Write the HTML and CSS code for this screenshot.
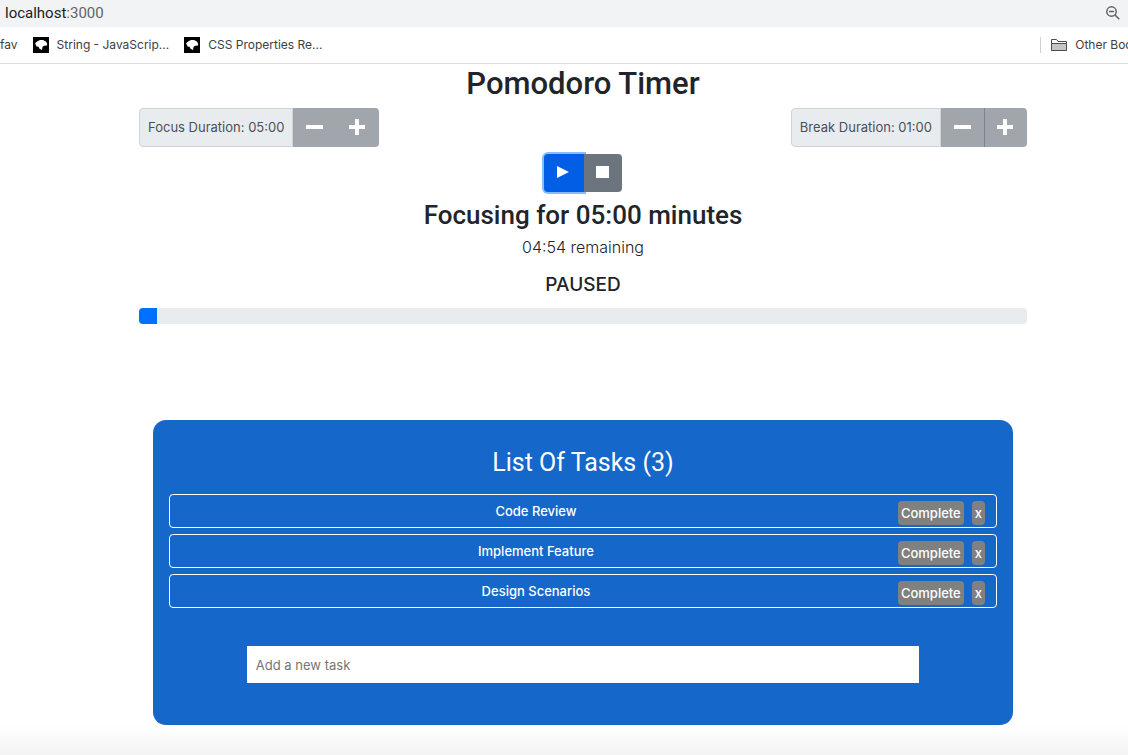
FILE: index.html
```html
<!DOCTYPE html>
<html lang="en">
<head>
<meta charset="utf-8">
<title>Pomodoro Timer</title>
<link rel="stylesheet" href="styles.css">
</head>
<body>
<header class="browser">
  <div class="address">
    <span class="url"><span class="host">localhost</span>:3000</span>
    <button class="zoom-button" type="button" aria-label="Zoom">
      <svg width="16" height="16" viewBox="0 0 16 16" fill="none" stroke="#5f6368" stroke-width="1.5"><circle cx="6.5" cy="6.5" r="4.7"/><path d="M4 6.5h5M10 10l4.3 4.3"/></svg>
    </button>
  </div>
  <nav class="bookmarks">
    <a class="bookmark" href="#">fav</a>
    <a class="bookmark" href="#">
      <svg width="16" height="16" viewBox="0 0 16 16"><path fill="#000" d="M0 0h16v16H0z"/><path fill="#fff" d="M2 6.500 4 4.500 7 3h3l3 1.500 1.200 2.500-.2 1.500-3 .3-1.500 1.200-.5 3-2.500-1.200-1-2L3.500 9.500 3 8z"/></svg>
      String - JavaScrip...
    </a>
    <a class="bookmark" href="#">
      <svg width="16" height="16" viewBox="0 0 16 16"><path fill="#000" d="M0 0h16v16H0z"/><path fill="#fff" d="M2 6.500 4 4.500 7 3h3l3 1.500 1.200 2.500-.2 1.500-3 .3-1.500 1.200-.5 3-2.500-1.200-1-2L3.500 9.500 3 8z"/></svg>
      CSS Properties Re...
    </a>
    <a class="bookmark other" href="#">
      <svg width="16" height="14" viewBox="0 0 16 14"><path fill="#fff" stroke="#4a4d51" d="M.5 12.500V1.500h5l1.500 2h8.500v9z"/><path fill="#c6c6c8" stroke="#4a4d51" d="M.5 5.500h15v7H.5z"/></svg>
      Other Bookmarks
    </a>
  </nav>
</header>
<main class="page">
  <div class="timer">
    <h1 class="title">Pomodoro Timer</h1>
    <div class="durations">
      <div class="group">
        <span class="duration">Focus Duration: 05:00</span>
        <button class="step" type="button" disabled aria-label="Decrease focus duration"><svg width="18" height="18" viewBox="0 0 18 18"><path d="M0 6h17v4H0z"/></svg></button>
        <button class="step" type="button" disabled aria-label="Increase focus duration"><svg width="18" height="18" viewBox="0 0 18 18"><path d="M6 0h4v6h6v4h-6v6H6v-6H0V6h6z"/></svg></button>
      </div>
      <div class="group">
        <span class="duration">Break Duration: 01:00</span>
        <button class="step" type="button" disabled aria-label="Decrease break duration"><svg width="18" height="18" viewBox="0 0 18 18"><path d="M0 6h17v4H0z"/></svg></button>
        <button class="step divided" type="button" disabled aria-label="Increase break duration"><svg width="18" height="18" viewBox="0 0 18 18"><path d="M6 0h4v6h6v4h-6v6H6v-6H0V6h6z"/></svg></button>
      </div>
    </div>
    <div class="controls">
      <button class="play" type="button" aria-label="Play"><svg width="14" height="14" viewBox="0 0 14 14"><path d="M0 0l12 6-12 6z"/></svg></button>
      <button class="stop" type="button" aria-label="Stop"><svg width="14" height="14" viewBox="0 0 14 14"><path d="M0 0h13v12H0z"/></svg></button>
    </div>
    <h2 class="session">Focusing for 05:00 minutes</h2>
    <p class="remaining">04:54 remaining</p>
    <h3 class="status">PAUSED</h3>
    <div class="progress" role="progressbar" aria-valuenow="2" aria-valuemin="0" aria-valuemax="100"><div class="progress-bar" style="width: 2%"></div></div>
  </div>
  <section class="tasks">
    <h2 class="tasks-title">List Of Tasks (3)</h2>
    <ul class="task-list">
      <li class="task"><span class="task-name">Code Review</span><button class="task-button" type="button">Complete</button><button class="task-button" type="button">x</button></li>
      <li class="task"><span class="task-name">Implement Feature</span><button class="task-button" type="button">Complete</button><button class="task-button" type="button">x</button></li>
      <li class="task"><span class="task-name">Design Scenarios</span><button class="task-button" type="button">Complete</button><button class="task-button" type="button">x</button></li>
    </ul>
    <input class="new-task" type="text" placeholder="Add a new task" aria-label="Add a new task">
  </section>
</main>
</body>
</html>
```
FILE: styles.css
```css
* {
  box-sizing: border-box;
}

body {
  display: flex;
  flex-direction: column;
  min-height: 100vh;
  margin: 0;
  overflow-x: hidden;
  font-family: Inter, "Liberation Sans", sans-serif;
  font-size: 13px;
  line-height: 20px;
  color: #212529;
  background: #fff;
}

h1, h2, h3, p, ul {
  margin: 0;
  padding: 0;
}

h1, h2 {
  font-family: Roboto, "Liberation Sans", sans-serif;
}

button {
  display: flex;
  align-items: center;
  justify-content: center;
  margin: 0;
  padding: 0;
  border: 0;
  font: inherit;
}

/* Browser bars */
.address {
  display: flex;
  align-items: center;
  justify-content: space-between;
  height: 26px;
  padding: 0 7px 0 5px;
  background: #f1f3f4;
  font-family: Roboto, sans-serif;
  font-size: 15px;
  color: #5f6368;
}

.browser {
  background: linear-gradient(#f1f3f4 27px, #fff 27px);
}

.host {
  color: #202124;
}

.zoom-button {
  background: none;
}

.bookmarks {
  display: flex;
  align-items: center;
  gap: 15px;
  height: 38px;
  overflow: hidden;
  border-bottom: 1px solid #dadce0;
  font-size: 12px;
}

.bookmark {
  display: flex;
  flex-shrink: 0;
  align-items: center;
  gap: 8px;
  color: #3c4043;
  text-decoration: none;
}

.other {
  height: 16px;
  margin-left: auto;
  margin-right: -46px;
  padding-left: 10px;
  border-left: 1px solid #cfd1d4;
}

/* Timer */
.page {
  flex: 1;
  padding: 0 0 30px 38px;
  background: linear-gradient(to top, #f3f3f3, #fff 30px);
}

.timer {
  max-width: 888px;
  margin: 0 auto;
  text-align: center;
}

.title {
  font-size: 31px;
  line-height: 40px;
  font-weight: 500;
}

.durations {
  display: flex;
  justify-content: space-between;
  margin-top: 4px;
}

.group {
  display: flex;
  height: 39px;
}

.duration {
  padding: 8px;
  border: 1px solid #ced4da;
  border-radius: 4px 0 0 4px;
  color: #495057;
  background: #e9ecef;
}

.step {
  width: 43px;
  background: #a0a6ab;
  fill: #fff;
}

.step:last-child {
  border-radius: 0 4px 4px 0;
}

.divided {
  border-left: 1px solid #7d858c;
}

.controls {
  display: flex;
  justify-content: center;
  height: 38px;
  margin-top: 7px;
  fill: #fff;
}

.play {
  width: 40px;
  border-radius: 4px 0 0 4px;
  background: #005fe5;
  box-shadow: 0 0 0 2px #85bdff;
}

.stop {
  width: 38px;
  border-radius: 0 4px 4px 0;
  background: #6c757d;
}

.session {
  margin-top: 7px;
  font-size: 26px;
  line-height: 32px;
  font-weight: 500;
}

.remaining {
  margin-top: 4px;
  font-size: 16px;
  line-height: 24px;
  font-weight: 300;
}

.status {
  margin-top: 13px;
  font-size: 19px;
  line-height: 26px;
  font-weight: 500;
}

.progress {
  height: 16px;
  margin-top: 10px;
  overflow: hidden;
  border-radius: 4px;
  background: #e9ecef;
}

.progress-bar {
  height: 100%;
  background: #0070ff;
}

/* Tasks */
.tasks {
  max-width: 860px;
  margin: 96px auto 0;
  padding: 27px 16px 42px;
  border-radius: 13px;
  color: #fff;
  background: #1567ca;
  text-align: center;
}

.tasks-title {
  font-size: 25px;
  line-height: 32px;
  font-weight: 400;
}

.task-list {
  display: grid;
  gap: 6px;
  margin-top: 15px;
  list-style: none;
}

.task {
  display: flex;
  gap: 8px;
  height: 34px;
  padding: 6px 11px 0 12px;
  border: 1px solid #fff;
  border-radius: 4px;
  font-weight: 500;
}

.task-name {
  flex: 1;
}

.task-button {
  height: 24px;
  padding: 0 3px;
  border-radius: 4px;
  color: #fff;
  background: #808080;
}

.new-task {
  width: 81.200%;
  height: 37px;
  margin: 38px auto 0;
  padding: 0 9px;
  display: block;
  border: 0;
  font: inherit;
  color: #495057;
  background: #fff;
}

.new-task::placeholder {
  color: #757575;
  opacity: 1;
}
```
